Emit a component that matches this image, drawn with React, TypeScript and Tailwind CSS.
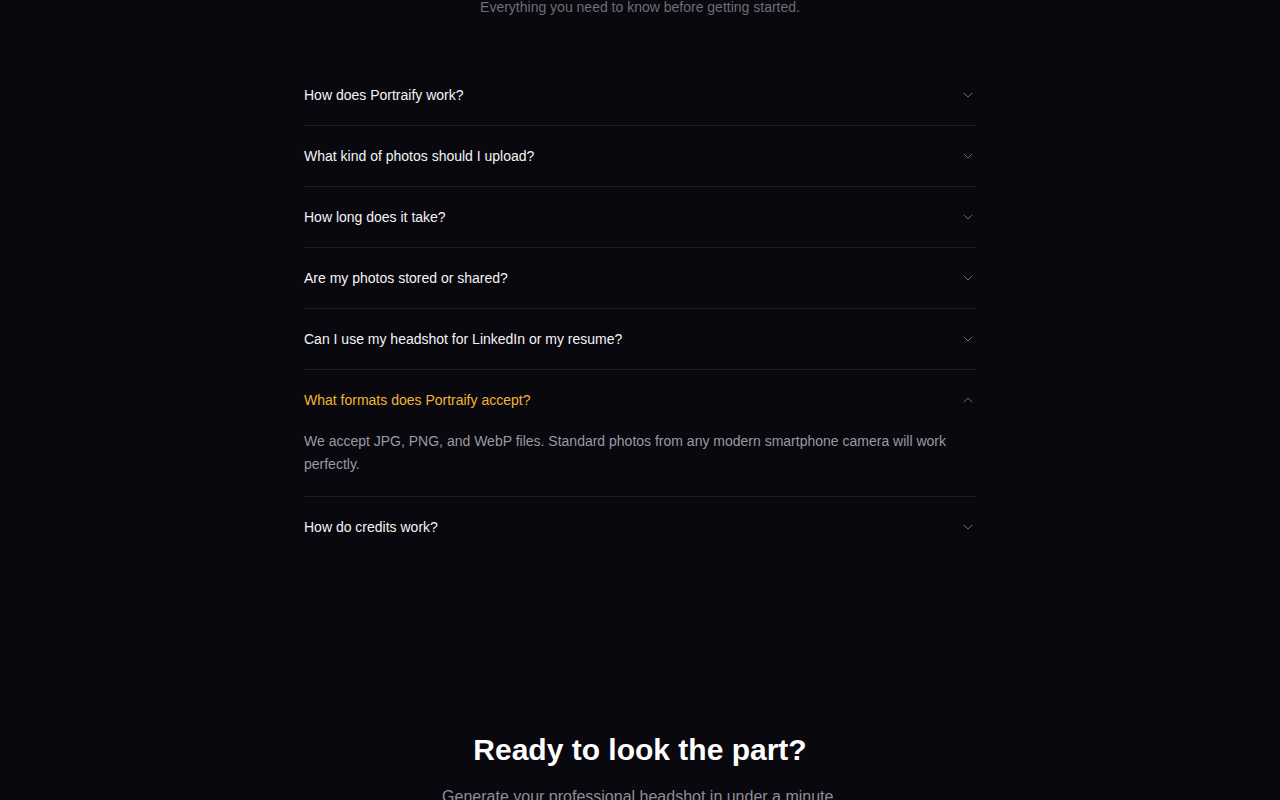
import React, { useState } from "react";
import { ChevronDown, ChevronUp } from "lucide-react";

const faqs = [
  {
    q: "How does Portraify work?",
    a: "Upload a few selfies, pick a style, and our AI generates studio-quality professional headshots in seconds.",
  },
  {
    q: "What kind of photos should I upload?",
    a: "Clear, well-lit photos of your face from different angles work best. Avoid sunglasses, hats and heavy filters.",
  },
  {
    q: "How long does it take?",
    a: "Most headshots are ready in under a minute.",
  },
  {
    q: "Are my photos stored or shared?",
    a: "Your photos are never shared and are deleted automatically after processing.",
  },
  {
    q: "Can I use my headshot for LinkedIn or my resume?",
    a: "Yes. You own full rights to every headshot you generate.",
  },
  {
    q: "What formats does Portraify accept?",
    a: "We accept JPG, PNG, and WebP files. Standard photos from any modern smartphone camera will work perfectly.",
  },
  {
    q: "How do credits work?",
    a: "Each generation uses one credit. Credits never expire.",
  },
];

export default function App() {
  const [open, setOpen] = useState<number | null>(5);

  return (
    <div className="min-h-screen bg-[#09080e] font-['Liberation_Sans',Arial,sans-serif] overflow-hidden">
      {/* FAQ */}
      <section className="px-6">
        <p className="-mt-[3px] text-center text-sm leading-5 text-[#6e6d78]">
          Everything you need to know before getting started.
        </p>

        <div className="mx-auto mt-12 max-w-2xl">
          {faqs.map((item, i) => {
            const isOpen = open === i;
            const isLast = i === faqs.length - 1;
            return (
              <div
                key={item.q}
                className={isLast ? "" : "border-b border-[#1e1d25]"}
              >
                <button
                  type="button"
                  onClick={() => setOpen(isOpen ? null : i)}
                  className="flex w-full items-center justify-between py-5 text-left"
                >
                  <span
                    className={`text-sm leading-5 ${
                      isOpen ? "text-[#f2b431]" : "text-[#f4f4f6]"
                    }`}
                  >
                    {item.q}
                  </span>
                  {isOpen ? (
                    <ChevronUp size={16} strokeWidth={1.5} className="text-[#6b6a75]" />
                  ) : (
                    <ChevronDown size={16} strokeWidth={1.5} className="text-[#6b6a75]" />
                  )}
                </button>
                {isOpen && (
                  <p className="pb-5 pr-6 text-sm leading-[23px] text-[#9a99a3]">
                    {item.a}
                  </p>
                )}
              </div>
            );
          })}
        </div>
      </section>

      {/* CTA */}
      <section className="px-6 pt-[175px] text-center">
        <h2 className="text-3xl font-bold leading-9 text-white">
          Ready to look the part?
        </h2>
        <p className="mt-[17px] text-base leading-6 text-[#8f8e99]">
          Generate your professional headshot in under a minute.
        </p>
      </section>
    </div>
  );
}
